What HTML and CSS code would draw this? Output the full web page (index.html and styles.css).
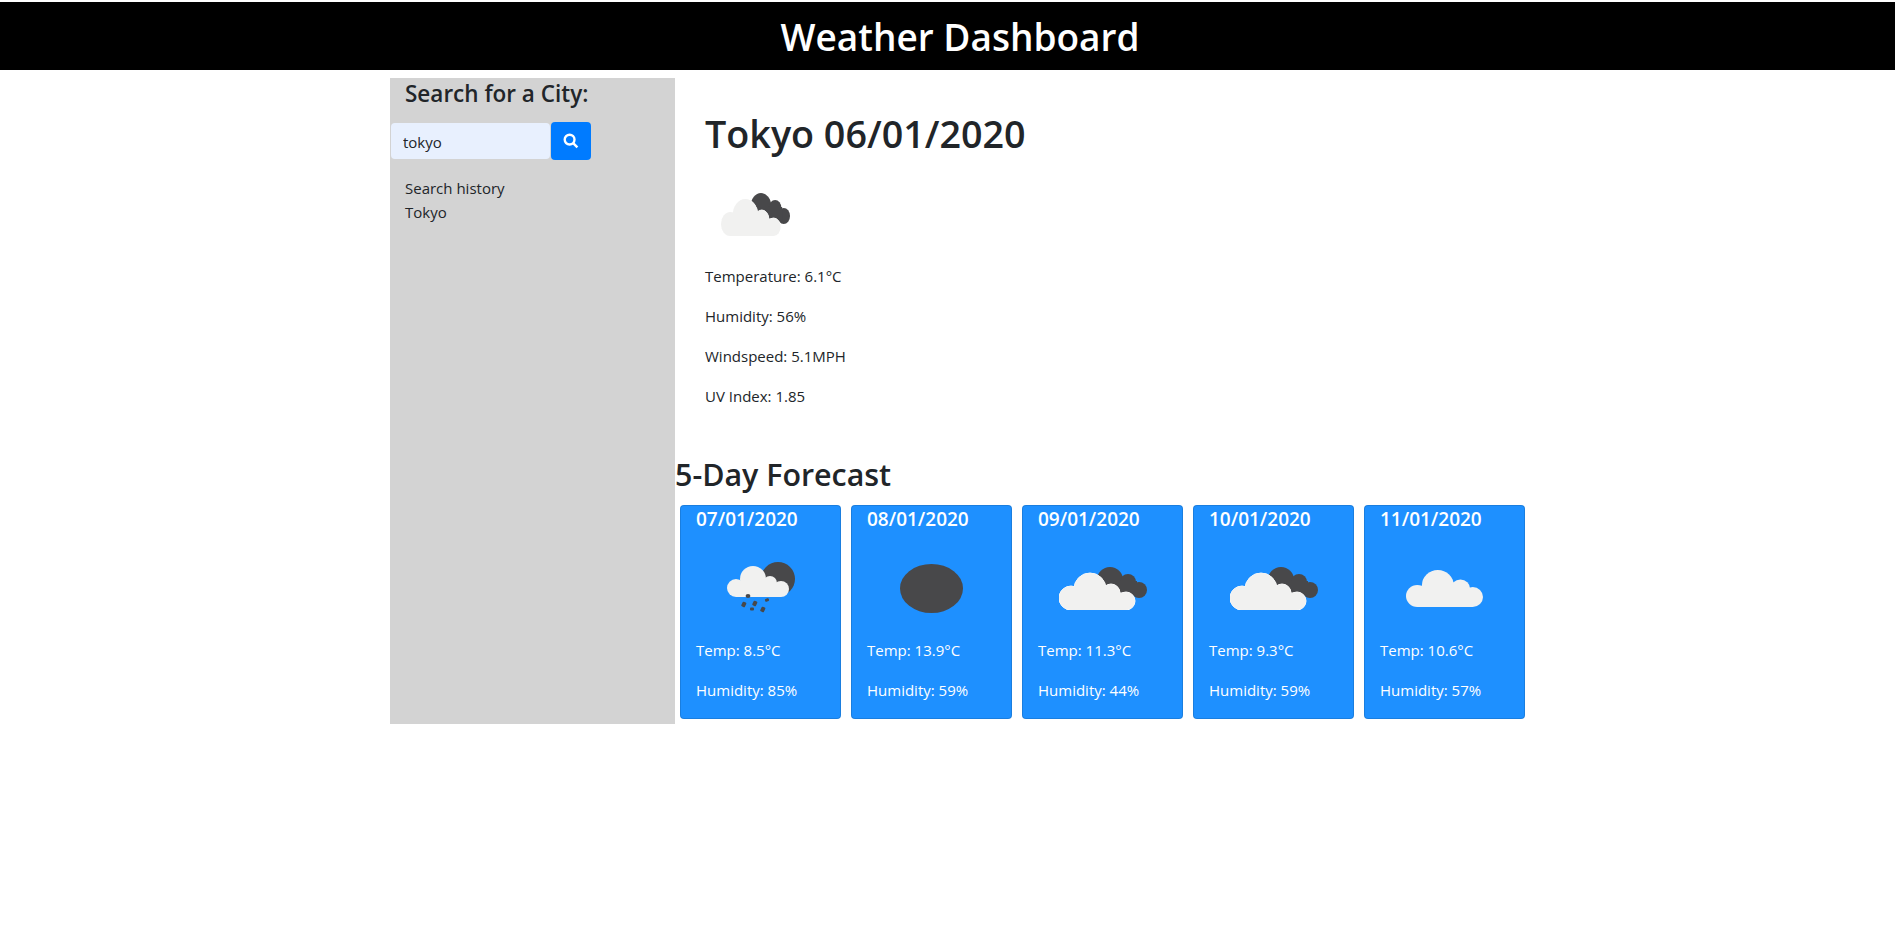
FILE: index.html
```html
<!DOCTYPE html>
<html lang="en">
<head>
  <meta charset="UTF-8" />
  <title>Weather Dashboard</title>
  <link rel="stylesheet" href="styles.css">
</head>
<body>
  <svg class="icon-defs" width="0" height="0">
    <defs>
      <symbol id="cloud-light" viewBox="0 0 75 37" preserveAspectRatio="none">
        <g class="light">
          <circle cx="11" cy="26" r="11" />
          <circle cx="31" cy="15.5" r="15.5" />
          <circle cx="53" cy="19" r="9.5" />
          <circle cx="65" cy="27" r="10" />
          <rect x="11" y="22" width="54" height="15" />
        </g>
      </symbol>
      <symbol id="cloud-double" viewBox="0 0 88 43" preserveAspectRatio="none">
        <g class="dark">
          <circle cx="51" cy="13" r="13" />
          <circle cx="69" cy="15" r="8" />
          <circle cx="80" cy="23" r="8" />
          <rect x="50" y="14" width="28" height="14" />
        </g>
        <g class="light edge">
          <circle cx="12" cy="31" r="12" />
          <circle cx="31" cy="22" r="16" />
          <circle cx="52" cy="26" r="9" />
          <circle cx="67" cy="34" r="9" />
          <rect x="12" y="26" width="55" height="17" />
        </g>
        <g class="light">
          <circle cx="12" cy="31" r="12" />
          <circle cx="31" cy="22" r="16" />
          <circle cx="52" cy="26" r="9" />
          <circle cx="67" cy="34" r="9" />
          <rect x="12" y="26" width="55" height="17" />
        </g>
      </symbol>
      <symbol id="cloud-rain" viewBox="0 0 68 52">
        <circle class="dark" cx="51" cy="17" r="17" />
        <g class="light">
          <circle cx="9" cy="26" r="9" />
          <circle cx="26" cy="17" r="13" />
          <circle cx="43" cy="21" r="7" />
          <circle cx="54" cy="27" r="8" />
          <rect x="9" y="22" width="45" height="13" />
        </g>
        <g class="dark">
          <ellipse cx="21" cy="34" rx="2.4" ry="2" />
          <rect x="15" y="40" width="4" height="5" rx="1" transform="rotate(25 17 42)" />
          <rect x="26" y="39" width="4" height="5" rx="1" transform="rotate(25 28 41)" />
          <rect x="38" y="36.5" width="4" height="3" rx="1" transform="rotate(-20 40 38)" />
          <rect x="23" y="45.5" width="4" height="3" rx="1" />
          <rect x="34" y="45" width="4" height="5" rx="1" transform="rotate(25 36 47)" />
        </g>
      </symbol>
    </defs>
  </svg>

  <header class="page-header">
    <h1>Weather Dashboard</h1>
  </header>

  <div class="page">
    <aside class="sidebar">
      <h4>Search for a City:</h4>
      <form class="search-form">
        <input class="search-input" type="text" value="tokyo" />
        <button class="search-btn" type="button" aria-label="Search">
          <svg width="16" height="16" viewBox="0 0 16 16">
            <circle class="lens" cx="6.6" cy="6.6" r="4.9" />
            <path class="lens" d="M10.2 10.2 L14.4 14.4" />
          </svg>
        </button>
      </form>
      <div class="history">
        <div>Search history</div>
        <div>Tokyo</div>
      </div>
    </aside>

    <main class="main">
      <section class="today">
        <h1>Tokyo 06/01/2020</h1>
        <svg class="today-icon"><use href="#cloud-double" /></svg>
        <p>Temperature: 6.1°C</p>
        <p>Humidity: 56%</p>
        <p>Windspeed: 5.1MPH</p>
        <p>UV Index: 1.85</p>
      </section>

      <h2>5-Day Forecast</h2>
      <div class="forecast">
        <div class="card">
          <h5>07/01/2020</h5>
          <div class="card-icon"><svg class="icon-rain"><use href="#cloud-rain" /></svg></div>
          <p>Temp: 8.5°C</p>
          <p>Humidity: 85%</p>
        </div>
        <div class="card">
          <h5>08/01/2020</h5>
          <div class="card-icon"><svg class="icon-sun" viewBox="0 0 63 49"><ellipse class="dark" cx="31.5" cy="24.5" rx="31.5" ry="24.5" /></svg></div>
          <p>Temp: 13.9°C</p>
          <p>Humidity: 59%</p>
        </div>
        <div class="card">
          <h5>09/01/2020</h5>
          <div class="card-icon"><svg class="icon-double"><use href="#cloud-double" /></svg></div>
          <p>Temp: 11.3°C</p>
          <p>Humidity: 44%</p>
        </div>
        <div class="card">
          <h5>10/01/2020</h5>
          <div class="card-icon"><svg class="icon-double"><use href="#cloud-double" /></svg></div>
          <p>Temp: 9.3°C</p>
          <p>Humidity: 59%</p>
        </div>
        <div class="card">
          <h5>11/01/2020</h5>
          <div class="card-icon"><svg class="icon-light"><use href="#cloud-light" /></svg></div>
          <p>Temp: 10.6°C</p>
          <p>Humidity: 57%</p>
        </div>
      </div>
    </main>
  </div>
</body>
</html>
```

FILE: styles.css
```css
body {
  margin: 0;
  font-family: "Open Sans", "Noto Sans", sans-serif;
  font-size: 15px;
  line-height: 24px;
  color: #212529;
  background: white;
  overflow-x: hidden;
}

h1, h2, h4, h5, p {
  margin: 0;
}

.icon-defs {
  display: block;
  height: 0;
}

.dark {
  fill: #48484a;
}
.light {
  fill: #f1f1f0;
}
.edge {
  stroke: #ffffff;
  stroke-width: 1;
}
.lens {
  fill: none;
  stroke: white;
  stroke-width: 2.4;
}

/* Header */
.page-header {
  margin-top: 2px;
  height: 68px;
  padding-left: 25px;
  background: black;
  color: white;
  text-align: center;
}
.page-header h1 {
  font-size: 37px;
  font-weight: 600;
  line-height: 70px;
}

.page {
  display: flex;
  width: 1140px;
  margin: 8px 0 0 390px;
}

/* Search column */
.sidebar {
  width: 285px;
  background: lightgray;
}
.sidebar h4 {
  padding: 1px 0 0 15px;
  font-size: 22.5px;
  font-weight: 600;
  line-height: 29px;
}
.search-form {
  display: flex;
  align-items: center;
  margin: 14px 0 0 1px;
}
.search-input {
  box-sizing: border-box;
  width: 159px;
  height: 36px;
  padding: 2px 12px 0;
  border: none;
  border-radius: 4px;
  background: #e8f0fe;
  font: inherit;
  color: #212529;
}
.search-btn {
  display: flex;
  align-items: center;
  justify-content: center;
  width: 40px;
  height: 38px;
  margin-left: 1px;
  padding: 0;
  border: none;
  border-radius: 4px;
  background: #007bff;
}
.history {
  margin: 16px 0 0 15px;
}

/* Current weather */
.main {
  flex: 1;
}
.today {
  padding: 32px 30px 0;
}
.today h1 {
  font-size: 37.7px;
  font-weight: 600;
  line-height: 48px;
}
.today-icon {
  display: block;
  width: 69px;
  height: 43px;
  margin: 35px 0 28px 16px;
}
.today p {
  margin-bottom: 16px;
}

.main h2 {
  margin-top: 48px;
  font-size: 30.4px;
  font-weight: 600;
  line-height: 38px;
}

/* Forecast cards */
.forecast {
  display: flex;
  gap: 10px;
  margin: 11px 0 5px 5px;
}
.card {
  box-sizing: border-box;
  width: 161px;
  height: 214px;
  padding: 0 15px;
  border: 1px solid rgba(0,0,0,.125);
  border-radius: 4px;
  background: dodgerblue;
  color: white;
}
.card h5 {
  font-size: 19px;
  font-weight: 600;
  line-height: 24px;
  padding-top: 1px;
}
.card-icon {
  box-sizing: border-box;
  display: flex;
  align-items: center;
  justify-content: center;
  height: 100px;
  padding-top: 14px;
  margin-bottom: 7px;
}
.card p {
  margin-bottom: 16px;
}
.icon-rain {
  width: 68px;
  height: 52px;
}
.icon-sun {
  width: 63px;
  height: 49px;
}
.icon-double {
  width: 88px;
  height: 43px;
}
.icon-light {
  width: 77px;
  height: 37px;
}
```
